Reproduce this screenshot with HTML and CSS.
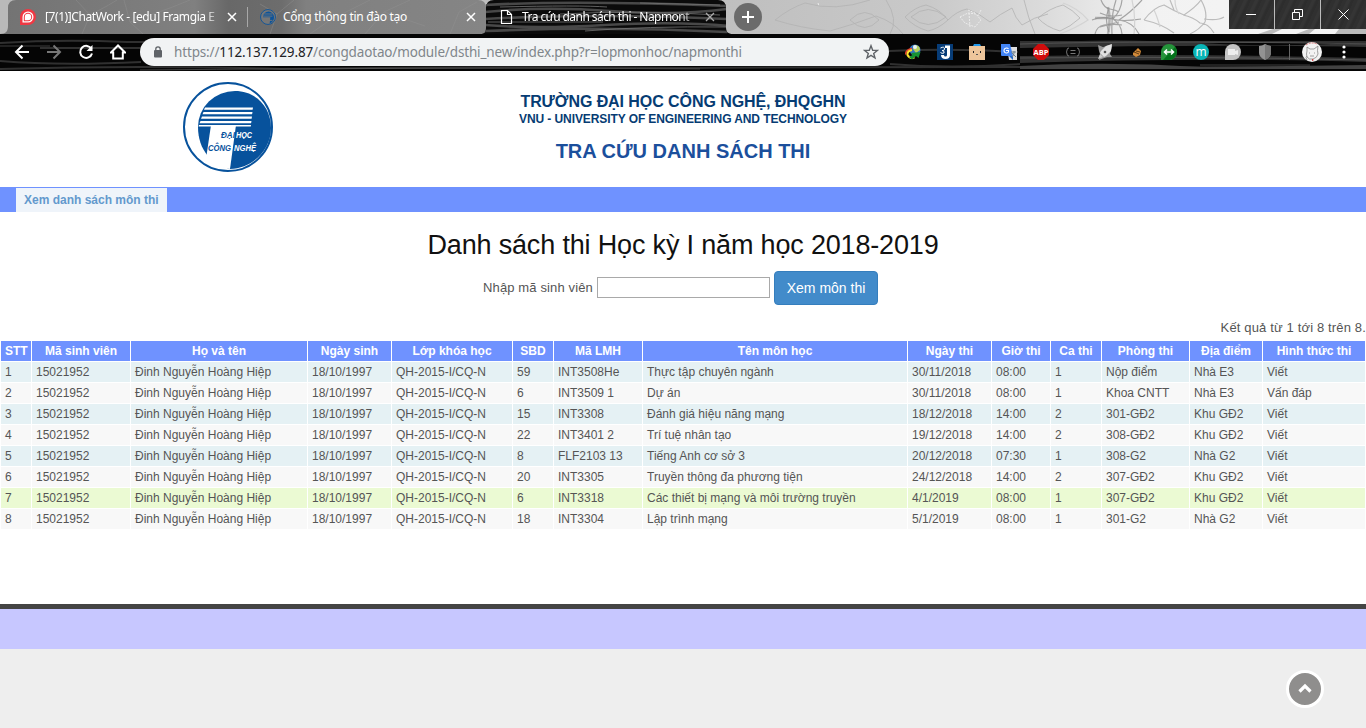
FILE: index.html
```html
<!DOCTYPE html>
<html lang="vi">
<head>
<meta charset="utf-8">
<title>Tra cứu danh sách thi - Napmonthi</title>
<link rel="stylesheet" href="styles.css">
</head>
<body>
<div class="browser">
  <svg class="theme" width="1366" height="71" viewBox="0 0 1366 71" aria-hidden="true">
    <defs>
      <linearGradient id="sky"><stop offset="0" stop-color="#b9b9b9"/><stop offset=".55" stop-color="#c0c0c0"/><stop offset=".68" stop-color="#c9c9c9"/><stop offset=".76" stop-color="#dadada"/><stop offset=".84" stop-color="#f2f2f2"/><stop offset="1" stop-color="#f5f5f5"/></linearGradient>
      <linearGradient id="tabfill"><stop offset="0" stop-color="#737373"/><stop offset=".4" stop-color="#808080"/><stop offset=".47" stop-color="#686868"/><stop offset=".58" stop-color="#6d6d6d"/><stop offset=".63" stop-color="#808080"/><stop offset="1" stop-color="#858585"/></linearGradient>
      <clipPath id="activeclip"><path d="M480 34c5 0 6-2 6-7V8q0-8 8-8h224q8 0 8 8v19c0 5 2 7 7 7z"/></clipPath>
    </defs>
    <rect width="1366" height="34" fill="url(#sky)"/>
    <path d="M0 34c6 0 8-3 8-8V8q0-8 8-8h462q8 0 8 8v26z" fill="url(#tabfill)"/>
    <g fill="none" stroke="#939393" stroke-width="1" opacity=".4">
      <path d="M82 34 90 15 76 0M90 15 107 6 117 0M124 0 130 22 143 34M130 22 170 8 190 0M270 34 277 14 294 0M277 14 260 4M310 34 330 20 370 0M365 34 384 12 410 0M384 12 425 26M450 34 459 12 477 2"/>
    </g>
    <g fill="none" stroke="#b3b3b3" stroke-width=".8">
      <path d="M775 20Q790 8 805 3M775 20q25 8 55 11 22-6 46-15 18 6 27 18M805 3q30 9 65-3M850 20q15-15 29 0-14 15-29 0M886 0Q899 20 890 34M905 17q10-10 21-12 14 4 22 15-10 9-20 11-14-4-23-14M911 17q17-15 35 0-18 15-35 0M948 20q9-9 19-11 12 4 23 13 10-8 22-14 3 10 10 17 12-8 26-11M1024 0q4 18 11 34M1038 18q12-10 25-13 10 5 17 13-10 9-20 13-14-4-22-13"/>
    </g>
    <g fill="none" stroke="#ececec" stroke-dasharray="2 1"><path d="m960 17 8-4 8 1 5 6-6 7-10-4zm9-4 1 14M968 10l7 3m6-3-3 6M818 3l1 3"/></g>
    <g fill="none" stroke="#a4a4a4" stroke-width="1.200">
      <path d="M1092 20q10-4 20-1t29 0M1101 0q3 8 9 9t9 3M1095 34q2-8 9-9t15-3M1109 8q-5 12 0 24M1100 13q10 5 22 2M1100 27q10-4 22-2M1116 0q-5 15-4 34M1122 34q-1-10-9-15 8-8 9-19M1119 20q12-8 23-20M1119 20q14 2 20 14"/>
      <path d="M1144 20q10-13 20-15 10 6 20 10 12-8 17-15M1144 20q18 4 30 13M1170 0l4 10M1201 0q7 12 4 22-6 8-15 12M1204 19q14 2 20-2M1183 15q10 2 17 8q8 0 14 10" stroke="#bcbcbc"/>
      <path d="M1060 34q16-6 28-14-10-12-25-17M1132 0q4 15 2 34M1154 10q3 6 6 17M1179 14q-4-6-4-14" stroke="#d3d3d3"/>
    </g>
    <path d="M1108 7q3 12 0 27M1095 18h19" fill="none" stroke="#888" stroke-width="2.500" opacity=".55"/>
    <path d="M1258 34l15-5h9l-10 5zM1296 34l13-5h6l-6 5zM1335 34l4-5h27v5z" fill="#bbb"/>
    <rect y="34" width="1366" height="37" fill="#050505"/>
    <g fill="none" stroke="#303030" stroke-width="2">
      <path d="M0 43Q62 39 127 42H420M0 61q60 5 141 1M40 48h100M0 69q140-4 280 0 270-3 400-1 250-2 686 0"/>
      <path d="M889 51q61-3 129 1M890 64q60 5 130 0M1020 42h346"/>
    </g>
    <path d="M1020 43q100-5 180 0t166-1v5q-150-3-346 1zM1020 56q160-3 346 2v4q-150-5-346 1z" fill="#333"/>
    <path d="M1020 66q90-5 180 1l166-2v4h-346z" fill="#424242"/>
    <g fill="none" stroke="#666" stroke-width=".6"><path d="M1020 44q130-4 346 0M1200 65h110M140 70q310-3 560-1M0 46h50M1020 58q180-2 346 2"/></g>
    <g clip-path="url(#activeclip)">
      <path d="M480 0h260v34H480z" fill="#0b0b0b"/>
      <g fill="none" stroke="#484848" stroke-width="2.600">
        <path d="M485 5q90-5 242 1M485 12q60-6 125-1t117-2M485 19q110-6 242 0M485 25q50 4 120 0t125 1M485 31q120-5 242 1"/>
      </g>
      <path d="M500 7q80-2 107 0M560 14q75-4 160 1M488 22h115M585 31q60-5 142-4M640 3l80 2" fill="none" stroke="#757575" stroke-width=".8"/>
    </g>
    <path d="M247.500 7v20" stroke="#a8a8a8"/>
  </svg>

  <div class="tabstrip">
    <div class="tab">
      <svg class="favicon" width="16" height="16" viewBox="0 0 16 16"><path d="M0 16V8a8 8 0 1 1 8 8z" fill="#f03843"/><path d="M2.500 13.500V8A5.500 5.500 0 1 1 8 13.500z" fill="#fff"/><path d="M3.800 12.200V8A4.200 4.200 0 1 1 8 12.200z" fill="#f03843"/><path d="M4.800 11.200V8A3.200 3.200 0 1 1 8 11.200z" fill="#fff"/></svg>
      <span class="tab-title first-title">[7(1)]ChatWork - [edu] Framgia E</span>
      <svg class="close" width="10" height="10" viewBox="0 0 10 10"><path d="m1 1 8 8m0-8-8 8"/></svg>
    </div>
    <div class="tab second">
      <svg class="favicon" width="16" height="16" viewBox="0 0 90 90"><circle cx="45" cy="45" r="42" fill="#777" stroke="#0b539b" stroke-width="5"/><path d="M17 45a31 34 0 1 1 37 36l4-35H17z" fill="#0b539b"/><path d="M24 28h46M18 40h52M28 52l-5 20m31-20-5 26M30 64h40" stroke="#777" stroke-width="5"/></svg>
      <span class="tab-title second-title">Cổng thông tin đào tạo</span>
      <svg class="close" width="10" height="10" viewBox="0 0 10 10"><path d="m1 1 8 8m0-8-8 8"/></svg>
    </div>
    <div class="tab active">
      <svg class="favicon" width="16" height="16" viewBox="0 0 16 16"><path d="M3.500 1.500h6l4 4v9h-10zM9.500 1.500v4h4" fill="none" stroke="#fff" stroke-width="1.200"/></svg>
      <span class="tab-title third-title">Tra cứu danh sách thi - Napmont</span>
      <svg class="close dim" width="10" height="10" viewBox="0 0 10 10"><path d="m1 1 8 8m0-8-8 8"/></svg>
    </div>
    <svg class="newtab" width="28" height="28" viewBox="0 0 28 28"><circle cx="14" cy="14" r="14" fill="#6b6b6b"/><path d="M14 8v12M8 14h12" stroke="#fff" stroke-width="2"/></svg>
    <div class="window-controls">
      <span class="control"><svg width="11" height="11" viewBox="0 0 11 11"><path d="M0 5.500h10"/></svg></span>
      <span class="control"><svg width="11" height="11" viewBox="0 0 11 11"><path d="M.5 3.500h7v7h-7zM2.500 3.500v-3h8v7h-3"/></svg></span>
      <span class="control"><svg width="11" height="11" viewBox="0 0 11 11"><path d="m.5.5 10 10m0-10-10 10"/></svg></span>
    </div>
  </div>

  <div class="toolbar">
    <svg class="nav-icon" width="16" height="16" viewBox="0 0 16 16"><path d="M15 8H2m6.500-6.500L2 8l6.500 6.500"/></svg>
    <svg class="nav-icon faded" width="16" height="16" viewBox="0 0 16 16"><path d="M1 8h13M7.500 1.500 14 8l-6.500 6.500"/></svg>
    <svg class="nav-icon" width="16" height="16" viewBox="0 0 16 16"><path d="M13.500 5A6 6 0 1 0 14 9.500"/><path d="M14.500 1v6h-6z" fill="#fff" stroke="none"/></svg>
    <svg class="nav-icon" width="16" height="16" viewBox="0 0 16 16"><path d="M1 8.500 8 1.500l7 7h-2.200v6H3.200v-6z"/></svg>
    <div class="address">
      <svg width="8" height="12" viewBox="0 0 8 12"><path d="M1.800 5V3a2.200 2.200 0 0 1 4.400 0v2" fill="none" stroke="#5f6368" stroke-width="1.300"/><rect y="4" width="8" height="7.500" rx="1" fill="#5f6368"/></svg>
      <span class="url">https://<b>112.137.129.87</b>/congdaotao/module/dsthi_new/index.php?r=lopmonhoc/napmonthi</span>
      <svg class="star" width="16" height="16" viewBox="0 0 16 16"><path d="m8 1.700 1.700 4.500 4.800.2-3.800 3 1.300 4.600L8 11.400 4 14l1.300-4.600-3.800-3 4.800-.2z" fill="none" stroke="#5f6368" stroke-width="1.400"/></svg>
    </div>
    <div class="extensions">
      <svg width="16" height="16" viewBox="0 0 16 16"><circle cx="10" cy="6" r="5.500" fill="#3575bf"/><path d="M9 1q6 0 6 5l-4 3-3-4z" fill="#b7cf5e"/><circle cx="10" cy="3" r="2" fill="#e5f0fa"/><path d="M7 4.500Q0 6 .8 10.500" fill="none" stroke="#e83e2e" stroke-width="1.500"/><path d="M7 6q-5 1-4.500 5 2 4 7 2.500" fill="none" stroke="#ffe22e" stroke-width="2"/><path d="m6 9 9.500-1-2 6-2.500-2-4 3.500-3-2.500 3.500-2z" fill="#169332"/></svg>
      <svg width="16" height="16" viewBox="0 0 16 16"><path d="M0 0h16v16H0z" fill="#073c77"/><path d="M8 1.500h5V11q0 4-4.500 4T4 11h3q0 1.500 1.500 1.500T10 11V4H8z" fill="#fff"/><path d="M3.500 4q4-2 4 1 0 2-2.500 1.500Q8 7 7 9 5 10 3.500 8.500" fill="none" stroke="#fff"/></svg>
      <svg width="16" height="16" viewBox="0 0 16 16"><path d="M0 2h16v14H0z" fill="#edc59b"/><path d="M4 2 5 0h6l1 2z" fill="#2196e8"/><path d="M4 7h1v2H4zm7 0h1v2h-1z" fill="#222"/><path d="m7 11 1-1 1 1" stroke="#555" fill="none"/></svg>
      <svg width="16" height="16" viewBox="0 0 16 16"><path d="M6 3h10v13H8z" fill="#ddd"/><path d="M0 0h9l3 12H1q-1 0-1-1z" fill="#4385f5"/><path d="m8 12 4 4V12z" fill="#2469c7"/><path d="M7.500 5a2.500 2.500 0 1 0 0 3V6.500H5" stroke="#fff" fill="none" stroke-width="1.100"/><path d="M10 8h5m-2-1v2q0 2-2 4m0-4 4 4" stroke="#70818c" fill="none"/></svg>
      <svg width="16" height="16" viewBox="0 0 16 16"><path d="M5 0h6l5 5v6l-5 5H5l-5-5V5z" fill="#d00c0c"/><text class="abp" x="8" y="10.800">ABP</text></svg>
      <svg width="16" height="16" viewBox="0 0 16 16"><path d="M4 4q-2 0-2 2t-1 2q1 0 1 2t2 2M12 4q2 0 2 2t1 2q-1 0-1 2t-2 2M5.500 6.500h5m-5 3h5" fill="none" stroke="#777"/></svg>
      <svg width="16" height="16" viewBox="0 0 16 16"><path d="m1 1 5 2 8-2.500L15 2l-2 8 2 3-5 0-8 3 1-6-1-3z" fill="#999"/><path d="M15 0 9 2 4 7l-1 2 4 4 2-1 5-5z" fill="#e2e2e2"/><path d="m1 15 2-5 3 3z" fill="#ccc"/><circle cx="8" cy="8" r="1.300" fill="#555"/></svg>
      <svg width="16" height="16" viewBox="0 0 16 16"><path d="m4 9 5-5 3 3-1 4-4 2-3-2z" fill="#d28a39"/><path d="m5 8 5 2M7 7l4 1" stroke="#633c14"/></svg>
      <svg width="16" height="16" viewBox="0 0 16 16"><path d="M0 16V8a8 8 0 1 1 8 8z" fill="#25943b"/><path d="M14 3a8 8 0 0 1-6 13H2z" fill="#04721b"/><path d="M3.500 8h9M6 5.500 3.500 8 6 10.500m4-5L12.500 8 10 10.500" stroke="#fff" fill="none" stroke-width="1.600"/></svg>
      <svg width="16" height="16" viewBox="0 0 16 16"><circle cx="8" cy="8" r="8" fill="#09b5b6"/><text class="momentum" x="8" y="11.500">m</text></svg>
      <svg width="16" height="16" viewBox="0 0 16 16"><path d="M0 16V8a8 8 0 1 1 8 8z" fill="#c4c4c4"/><path d="M3 5h7v2l3-1v5l-3-1v1H3z" fill="#eee"/></svg>
      <svg width="16" height="16" viewBox="0 0 16 16"><path d="M8 0q3 2 6 2v7q0 4-6 7-6-3-6-7V2q3 0 6-2z" fill="#929292"/><path d="M8 0q3 2 6 2v7q0 4-6 7z" fill="#777"/></svg>
    </div>
    <span class="separator"></span>
    <svg class="avatar" width="20" height="20" viewBox="0 0 20 20"><circle cx="10" cy="10" r="10" fill="#f3f3f3"/><path d="M5 15q-1-3 0-6L5 5l3 2h4l4-3q-1 5 0 8-1 4-5 5-4 1-6-2m2-4h1m4 0h1M8 14h4m-7 0q-2 1 0 4" fill="none" stroke="#888" stroke-width=".8"/><path d="M4 3q5-3.500 11-1" fill="none" stroke="#d57070" stroke-dasharray="2 1"/><path d="m10 17 2 1-2 1z" fill="#d62424"/></svg>
    <svg class="kebab" width="4" height="16" viewBox="0 0 4 16" fill="#fff"><circle cx="2" cy="3" r="1.600"/><circle cx="2" cy="8" r="1.600"/><circle cx="2" cy="13" r="1.600"/></svg>
  </div>
</div>

<header class="masthead">
  <svg class="logo" width="90" height="90" viewBox="0 0 90 90">
    <circle cx="45" cy="45" r="44" fill="#fff" stroke="#07529c" stroke-width="2"/>
    <path d="M15 45A37 36 0 0 1 52 9C73 9 88 25 88 46 88 68 70 86 47 87 29 83 15 68 15 45z" fill="#07529c"/>
    <path d="M28 43H53L47 87Q33 85 23 77z" fill="#fff"/>
    <path d="M22 25.500h48l-.4 2.300H21zm-1.500 4.500h49l-.4 2.300H19.500zm-1.500 4.500h50l-.4 2.300H18zm-1.500 4.500h51l-.4 2.300H16.500zM16 43h52l-.2 1.500H15.500z" fill="#fff"/>
    <text class="logo-text dark" x="38" y="56" textLength="14" lengthAdjust="spacingAndGlyphs">ĐẠI</text><text class="logo-text light" x="53" y="56" textLength="16" lengthAdjust="spacingAndGlyphs">HỌC</text>
    <text class="logo-text dark" x="25" y="69" textLength="23" lengthAdjust="spacingAndGlyphs">CÔNG</text><text class="logo-text light" x="51" y="69" textLength="22" lengthAdjust="spacingAndGlyphs">NGHỆ</text>
  </svg>
  <div class="heading">
    <div class="school">TRƯỜNG ĐẠI HỌC CÔNG NGHỆ, ĐHQGHN</div>
    <div class="school-en">VNU - UNIVERSITY OF ENGINEERING AND TECHNOLOGY</div>
    <div class="service">TRA CỨU DANH SÁCH THI</div>
  </div>
</header>
<nav class="mainmenu"><a class="menu-item"><span>Xem danh sách môn thi</span></a></nav>
<main class="content">
  <h1>Danh sách thi Học kỳ I năm học 2018-2019</h1>
  <form class="search"><label for="student">Nhập mã sinh viên</label><input id="student" type="text"><button type="button">Xem môn thi</button></form>
  <div class="summary">Kết quả từ 1 tới 8 trên 8.</div>
  <table class="items">
    <colgroup><col class="c-index"><col class="c-id"><col class="c-name"><col class="c-birth"><col class="c-class"><col class="c-number"><col class="c-code"><col class="c-subject"><col class="c-date"><col class="c-time"><col class="c-shift"><col class="c-room"><col class="c-place"><col class="c-form"></colgroup>
    <thead><tr><th>STT</th><th>Mã sinh viên</th><th>Họ và tên</th><th>Ngày sinh</th><th>Lớp khóa học</th><th>SBD</th><th>Mã LMH</th><th>Tên môn học</th><th>Ngày thi</th><th>Giờ thi</th><th>Ca thi</th><th>Phòng thi</th><th>Địa điểm</th><th>Hình thức thi</th></tr></thead>
    <tbody>
      <tr><td>1</td><td>15021952</td><td>Đinh Nguyễn Hoàng Hiệp</td><td>18/10/1997</td><td>QH-2015-I/CQ-N</td><td>59</td><td>INT3508He</td><td>Thực tập chuyên ngành</td><td>30/11/2018</td><td>08:00</td><td>1</td><td>Nộp điểm</td><td>Nhà E3</td><td>Viết</td></tr>
      <tr><td>2</td><td>15021952</td><td>Đinh Nguyễn Hoàng Hiệp</td><td>18/10/1997</td><td>QH-2015-I/CQ-N</td><td>6</td><td>INT3509 1</td><td>Dự án</td><td>30/11/2018</td><td>08:00</td><td>1</td><td>Khoa CNTT</td><td>Nhà E3</td><td>Vấn đáp</td></tr>
      <tr><td>3</td><td>15021952</td><td>Đinh Nguyễn Hoàng Hiệp</td><td>18/10/1997</td><td>QH-2015-I/CQ-N</td><td>15</td><td>INT3308</td><td>Đánh giá hiệu năng mạng</td><td>18/12/2018</td><td>14:00</td><td>2</td><td>301-GĐ2</td><td>Khu GĐ2</td><td>Viết</td></tr>
      <tr><td>4</td><td>15021952</td><td>Đinh Nguyễn Hoàng Hiệp</td><td>18/10/1997</td><td>QH-2015-I/CQ-N</td><td>22</td><td>INT3401 2</td><td>Trí tuệ nhân tạo</td><td>19/12/2018</td><td>14:00</td><td>2</td><td>308-GĐ2</td><td>Khu GĐ2</td><td>Viết</td></tr>
      <tr><td>5</td><td>15021952</td><td>Đinh Nguyễn Hoàng Hiệp</td><td>18/10/1997</td><td>QH-2015-I/CQ-N</td><td>8</td><td>FLF2103 13</td><td>Tiếng Anh cơ sở 3</td><td>20/12/2018</td><td>07:30</td><td>1</td><td>308-G2</td><td>Nhà G2</td><td>Viết</td></tr>
      <tr><td>6</td><td>15021952</td><td>Đinh Nguyễn Hoàng Hiệp</td><td>18/10/1997</td><td>QH-2015-I/CQ-N</td><td>20</td><td>INT3305</td><td>Truyền thông đa phương tiện</td><td>24/12/2018</td><td>14:00</td><td>2</td><td>307-GĐ2</td><td>Khu GĐ2</td><td>Viết</td></tr>
      <tr class="selected"><td>7</td><td>15021952</td><td>Đinh Nguyễn Hoàng Hiệp</td><td>18/10/1997</td><td>QH-2015-I/CQ-N</td><td>6</td><td>INT3318</td><td>Các thiết bị mạng và môi trường truyền</td><td>4/1/2019</td><td>08:00</td><td>1</td><td>307-GĐ2</td><td>Khu GĐ2</td><td>Viết</td></tr>
      <tr><td>8</td><td>15021952</td><td>Đinh Nguyễn Hoàng Hiệp</td><td>18/10/1997</td><td>QH-2015-I/CQ-N</td><td>18</td><td>INT3304</td><td>Lập trình mạng</td><td>5/1/2019</td><td>08:00</td><td>1</td><td>301-G2</td><td>Nhà G2</td><td>Viết</td></tr>
    </tbody>
  </table>
</main>
<footer class="footer"></footer>
<a class="back-top" aria-label="Lên đầu trang"><svg width="38" height="38" viewBox="0 0 38 38"><circle cx="19" cy="19" r="17.500" fill="#8f8e8d" stroke="#fff" stroke-width="3"/><path d="m13.500 21.500 5.500-5.500 5.500 5.500" fill="none" stroke="#fff" stroke-width="3.200"/></svg></a>
</body>
</html>
```
FILE: styles.css
```css
* { box-sizing: border-box; }
body { margin: 0; height: 728px; overflow: hidden; background: #eee; color: #555; font: 13px "Liberation Sans", Arial, sans-serif; }
svg { display: block; flex: none; }
.browser { position: relative; height: 71px; font-family: "Noto Sans", "Open Sans", sans-serif; }
.theme { position: absolute; left: 0; top: 0; }
.tabstrip { position: relative; display: flex; height: 34px; padding-left: 8px; }
.tab { display: flex; align-items: center; width: 240px; padding: 0 11px 0 12px; color: #fff; font-size: 12px; }
.tab.second { width: 238px; padding-right: 10px; }
.tab.active { width: 240px; }
.tab-title { margin-left: 9px; white-space: nowrap; line-height: 20px; }
.second .tab-title { margin-left: 7px; }
.active .tab-title { margin-left: 8px; }
.first-title { width: 174px; letter-spacing: -.42px; mask-image: linear-gradient(90deg, #000 92%, transparent 102%); }
.second-title { letter-spacing: -.3px; }
.third-title { width: 175px; letter-spacing: -.56px; mask-image: linear-gradient(90deg, #000 90%, transparent 102%); }
.close { margin-left: auto; fill: none; stroke: #fff; stroke-width: 1.5; }
.close.dim { stroke: #aaa; stroke-width: 1.3; }
.newtab { margin: 3px 0 0 8px; }
.window-controls { display: flex; gap: 1px; height: 29px; margin-left: auto; background: #bbb; }
.control { display: flex; align-items: center; justify-content: center; width: 45px; background: repeating-linear-gradient(115deg, #303030 0 3px, #353535 4px 6px, #2d2d2d 8px 10px); }
.control svg { fill: none; stroke: #fff; }
.toolbar { position: relative; display: flex; align-items: center; height: 37px; padding: 0 20px 1px 14px; }
.nav-icon { margin-right: 16px; fill: none; stroke: #fff; stroke-width: 2; }
.nav-icon.faded { stroke: #777; }
.nav-icon:nth-child(4) { margin-right: 14px; }
.address { display: flex; align-items: center; width: 749px; height: 28px; padding: 0 10px 0 14px; border-radius: 14px; background: #f1f3f4; }
.url { margin-left: 12px; color: #80868b; font-size: 13.5px; letter-spacing: -.15px; white-space: nowrap; }
.url b { color: #202124; font-weight: 400; }
.star { margin-left: auto; }
.extensions { display: flex; gap: 16px; margin-left: 16px; }
.abp { fill: #fff; font: bold 7.5px "Open Sans", sans-serif; text-anchor: middle; }
.momentum { fill: #fff; font: 12px "Open Sans", sans-serif; text-anchor: middle; }
.separator { width: 1px; height: 16px; margin-left: 16px; background: #666; }
.avatar { margin-left: 12px; }
.kebab { margin-left: auto; }
.masthead { position: relative; display: flex; justify-content: center; height: 116px; background: #fff; }
.logo { position: absolute; left: 183px; top: 11px; }
.logo-text { font: italic bold 9px "Liberation Sans", Arial, sans-serif; }
.dark { fill: #07529c; }
.light { fill: #fff; }
.heading { padding-top: 21px; text-align: center; font-weight: bold; white-space: nowrap; }
.school { color: #063c73; font-size: 16px; letter-spacing: -.07px; line-height: 20px; }
.school-en { color: #063c73; font-size: 12px; letter-spacing: -.09px; line-height: 14px; }
.service { margin-top: 13px; color: #1b4f9c; font-size: 20px; line-height: 24px; }
.mainmenu { display: flex; height: 25px; padding: 1px 16px 0; background: #6f92ff; }
.menu-item { width: 151px; padding-left: 8px; background: #eff4fa; color: #6399cd; font-size: 12px; font-weight: bold; line-height: 24px; white-space: nowrap; }
.content { height: 392px; background: #fff; }
h1 { margin: 0; padding-top: 17px; color: #111; font-size: 27px; font-weight: 400; letter-spacing: -.17px; line-height: 32px; text-align: center; }
.search { display: flex; align-items: center; height: 34px; margin: 10px 0 0 483px; }
.search label { width: 114px; padding-bottom: 1px; letter-spacing: .13px; white-space: nowrap; }
.search input { width: 173px; height: 21px; margin: 0 4px 1px 0; border: 1px solid #a9a9a9; }
.search button { width: 104px; height: 34px; padding: 0; border: 1px solid #357ebd; border-radius: 4px; background: #428bca; color: #fff; font: 14px "Liberation Sans", Arial, sans-serif; }
.summary { height: 35px; padding-top: 13px; letter-spacing: .15px; line-height: 20px; text-align: right; }
.items { width: 1366px; border-collapse: separate; border-spacing: 0; border-right: 1px solid #fff; table-layout: fixed; font-size: 12px; }
.items th, .items td { height: 21px; padding: 0 4px; border: solid #fff; border-width: 1px 0 0 1px; line-height: 20px; white-space: nowrap; }
.items th { background: #6f92ff; color: #fff; }
.items td { background: #f8f8f8; }
.items tr:nth-child(odd) td { background: #e5f1f4; }
.items tr.selected td { background: #ebfad3; }
.c-index { width: 31px; } .c-id { width: 99px; } .c-name { width: 177px; } .c-birth { width: 84px; }
.c-class { width: 121px; } .c-number { width: 41px; } .c-code { width: 89px; } .c-subject { width: 265px; }
.c-date { width: 84px; } .c-time { width: 59px; } .c-shift { width: 51px; } .c-room { width: 88px; }
.c-place { width: 73px; } .c-form { width: 103px; }
.footer { height: 45px; border-top: 5px solid #444; background: #c7c7ff; }
.back-top { position: fixed; left: 1286px; top: 670px; }
```
